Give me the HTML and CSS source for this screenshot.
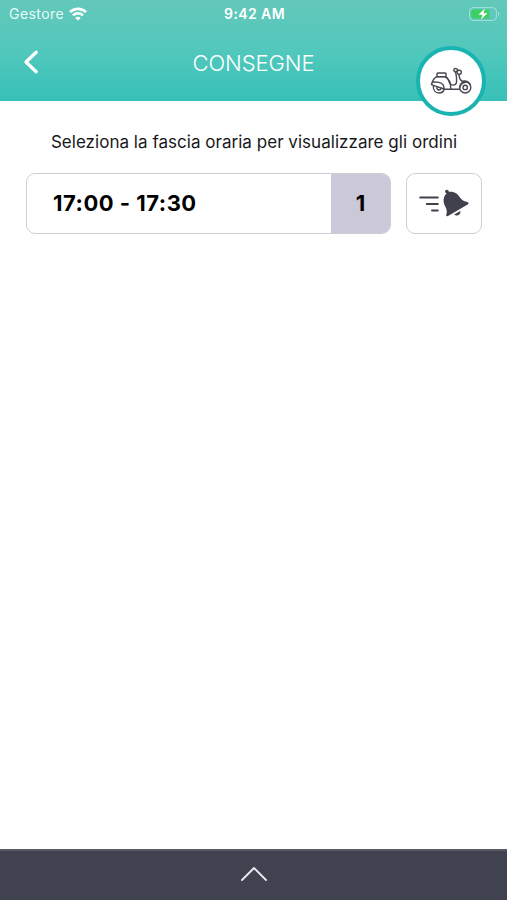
FILE: index.html
```
<!DOCTYPE html>
<html lang="it">
<head>
    <meta charset="UTF-8">
    <meta name="viewport" content="width=device-width, initial-scale=1">
    <title>Consegne</title>
    <link rel="stylesheet" href="styles.css">
</head>
<body>
<header class="header">
    <div class="status-bar">
        <div class="carrier">
            <span class="carrier-name">Gestore</span>
            <svg class="wifi" width="18" height="14" viewBox="0 0 18 14" fill="none" stroke="#fff" stroke-width="2.6">
                <path d="M1 5.2C5.4.8 12.6.8 17 5.2"/>
                <path d="M4 8.4c2.8-2.8 7.2-2.8 10 0"/>
                <path d="M9 13.6 6.2 10.9c1.6-1.5 4-1.5 5.6 0z" fill="#fff" stroke="none"/>
            </svg>
        </div>
        <span class="time">9:42 AM</span>
        <svg class="battery" width="31" height="14" viewBox="0 0 31 14">
            <rect x=".6" y=".6" width="26.8" height="12.8" rx="3.6" fill="none" stroke="#a4e3d8" stroke-width="1"/>
            <rect x="2.4" y="2.4" width="18" height="9.2" rx="2" fill="#3ccf62"/>
            <path d="M29 4.8c1.6.7 1.6 3.7 0 4.4z" fill="#a4e3d8"/>
            <path d="M15.8 1.6 9.4 7.8h4L12 12.4l6.5-6.2h-4z" fill="#fff"/>
        </svg>
    </div>
    <div class="nav">
        <a class="back" href="#" aria-label="Indietro">
            <svg width="16" height="26" viewBox="0 0 16 26" fill="none" stroke="#fff" stroke-width="3.3" stroke-linecap="round" stroke-linejoin="round">
                <path d="M13.2 3.2 3 13l10.2 9.8"/>
            </svg>
        </a>
        <h1 class="title">CONSEGNE</h1>
    </div>
    <div class="badge">
        <svg width="42" height="28" viewBox="0 0 42 28" fill="none" stroke="#48464e" stroke-width="1.4" stroke-linecap="round" stroke-linejoin="round">
            <rect x="7" y="6" width="9" height="3.6" rx=".8"/>
            <path d="M6.500 9.800h8.500c4 1.400 5.800 5.600 5.800 12.200"/>
            <path d="M6.500 9.800C4 11 2.300 14 1.500 17.600l4 1.600 8.500 2.800c.3-3.600-2-6-5-6.600L2.600 14.800"/>
            <path d="M14 22.200h15.400c.3-4 2.600-6.600 6.600-7.200"/>
            <path d="M16 9.800c2 1.200 2.600 3 3.200 5 1.200 4.400 7 4.400 7.400-.2.200-3.200-.2-6-1-9.400"/>
            <path d="M29 7.600c.2 3.400 1 5.400 3 6.600 3.500-.7 6.800.6 8.200 3.200"/>
            <path d="M24.200 1.900c1.300-.9 3.200-.4 3.700 1.300l-2.500 2-1.600-1.700z"/>
            <circle cx="29.200" cy="5.300" r="2.100"/>
            <path d="M3.300 19.500c0 3.700 2.300 6.500 5.500 6.500s5-1.800 5.400-4"/>
            <path d="M7 20.200c-.3 1.800.6 2.800 1.900 2.800s2-.8 2.100-1.700"/>
            <circle cx="35.200" cy="20.400" r="5.600"/>
            <circle cx="35.200" cy="20.400" r="2.200"/>
        </svg>
    </div>
</header>

<main class="content">
    <p class="hint">Seleziona la fascia oraria per visualizzare gli ordini</p>
    <div class="slot-row">
        <div class="slot">
            <span class="slot-time">17:00 - 17:30</span>
            <span class="slot-count">1</span>
        </div>
        <button class="notify" type="button" aria-label="Avvisa">
            <svg width="52" height="30" viewBox="0 0 52 30" fill="#40414d">
                <path d="M2.200 9.500h17.600M8.800 16h11M14 22.400h5.800" stroke="#40414d" stroke-width="2" stroke-linecap="round"/>
                <path d="M27.500 2.200c1.400-1.200 3.300-.3 3.300 1.600 5.300-.8 8.800 1.500 11.600 6.300 1.700 2.500 4 3.300 7.100 4 1.300.4 1.300 1.700.2 2.400L30 28c-1.200.6-2.100-.2-1.700-1.400.9-3 .6-5-.7-7.400-2.900-5.300-2.700-10.200 1-14-1.500-.3-2-1.700-1.100-3z"/>
                <path d="m36.200 26.500 6.100-3.600c1 3.300-3.700 6-6.100 3.600z"/>
            </svg>
        </button>
    </div>
</main>

<footer class="drawer">
    <svg width="28" height="16" viewBox="0 0 28 16" fill="none" stroke="#eceaf3" stroke-width="1.8" stroke-linecap="round" stroke-linejoin="round">
        <path d="M2 14 14 2l12 12"/>
    </svg>
</footer>
</body>
</html>
```
FILE: styles.css
```
* {
    box-sizing: border-box;
}
body {
    margin: 0;
    height: 100vh;
    display: flex;
    flex-direction: column;
    overflow: hidden;
    background: #fff;
    color: #18181a;
    font-family: Inter, 'Liberation Sans', sans-serif;
}
.header {
    position: relative;
    height: 101px;
    background: linear-gradient(#63c8ba, #52c8bc 50%, #37c0b8);
    color: #fff;
}
.status-bar {
    display: grid;
    grid-template-columns: 1fr auto 1fr;
    align-items: center;
    height: 27px;
    padding: 0 7px 0 9px;
}
.carrier {
    display: flex;
    align-items: center;
    gap: 5px;
}
.carrier-name {
    font-size: 14px;
    letter-spacing: .45px;
    color: #e6faf6;
}
.time {
    font-size: 14px;
    font-weight: 600;
    letter-spacing: .4px;
}
.battery {
    justify-self: end;
}
.nav {
    display: grid;
    grid-template-columns: 60px 1fr 60px;
    align-items: center;
    height: 72px;
}
.back {
    display: flex;
    padding: 0 0 3px 23px;
}
.title {
    margin: 0;
    font-size: 22px;
    font-weight: 300;
    letter-spacing: -.1px;
    text-align: center;
}
/* sits across the lower edge of the header */
.badge {
    position: absolute;
    top: 46px;
    right: 21px;
    width: 70px;
    height: 70px;
    display: flex;
    justify-content: center;
    align-items: center;
    border: 4px solid #19b3b1;
    border-radius: 50%;
    background: #fff;
}
.content {
    flex: 1;
    padding: 30px 25px 0 26px;
}
.hint {
    margin: 0 0 20px;
    font-size: 17px;
    line-height: 22px;
    letter-spacing: .03px;
    text-align: center;
    white-space: nowrap;
}
.slot-row {
    display: flex;
    gap: 15px;
}
.slot {
    flex: 1;
    display: flex;
    height: 61px;
    border: 1px solid #cfced4;
    border-radius: 9px;
    overflow: hidden;
    color: #000;
    font-size: 22px;
    font-weight: 700;
}
.slot-time {
    flex: 1;
    display: flex;
    align-items: center;
    padding: 0 0 1px 26px;
    letter-spacing: .5px;
}
.slot-count {
    width: 59px;
    display: flex;
    justify-content: center;
    align-items: center;
    padding-bottom: 1px;
    background: #cbc8d7;
}
.notify {
    width: 76px;
    height: 61px;
    display: flex;
    justify-content: center;
    align-items: center;
    padding: 0 0 2px;
    border: 1px solid #cfced4;
    border-radius: 9px;
    background: #fff;
}
.drawer {
    display: flex;
    justify-content: center;
    align-items: center;
    height: 51px;
    padding-bottom: 3px;
    border-top: 2px solid #575863;
    background: #40424f;
}
```
